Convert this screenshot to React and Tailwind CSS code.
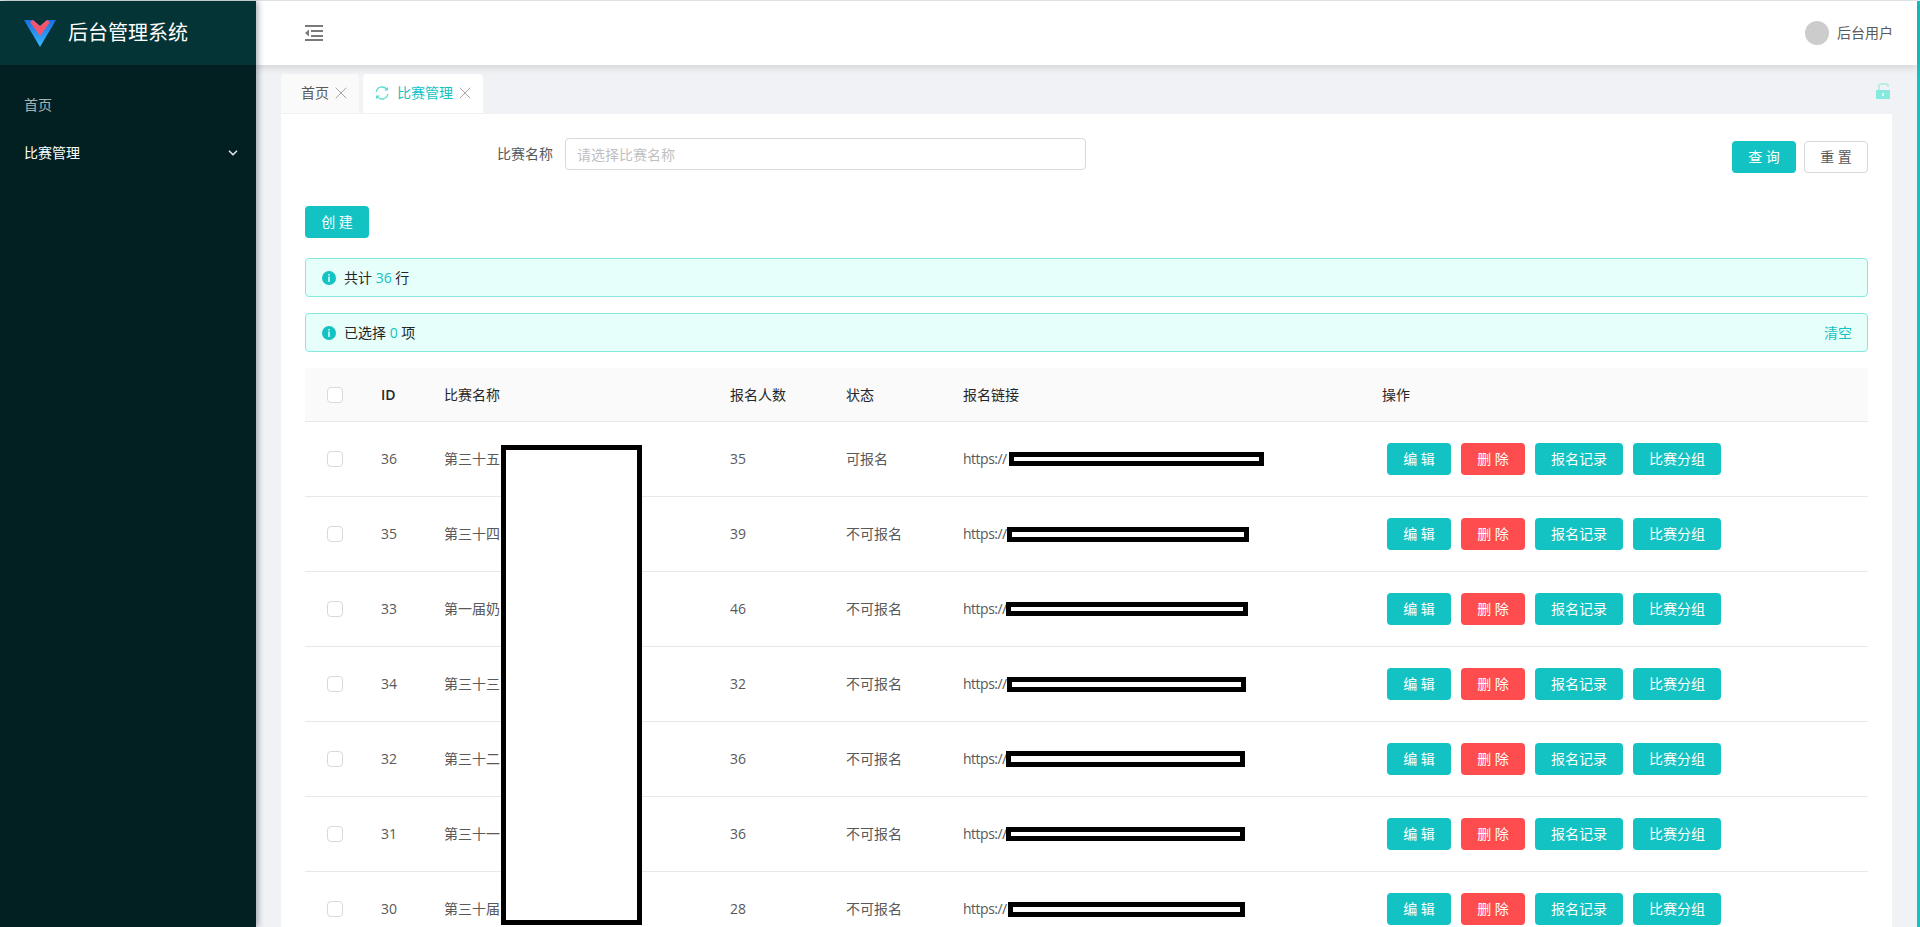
import { X, ChevronDown } from "lucide-react";

const ROWS = [
  { id: 36, name: "第三十五", count: 35, status: "可报名", linkWidth: "w-[255px]", linkClass: "h-[14px] ml-[2px]" },
  { id: 35, name: "第三十四", count: 39, status: "不可报名", linkWidth: "w-[242px]", linkClass: "h-[15px] ml-0" },
  { id: 33, name: "第一届奶", count: 46, status: "不可报名", linkWidth: "w-[242px]", linkClass: "h-[14px] -ml-[1px]" },
  { id: 34, name: "第三十三", count: 32, status: "不可报名", linkWidth: "w-[239px]", linkClass: "h-[15px] ml-0" },
  { id: 32, name: "第三十二", count: 36, status: "不可报名", linkWidth: "w-[239px]", linkClass: "h-[16px] -ml-[1px]" },
  { id: 31, name: "第三十一", count: 36, status: "不可报名", linkWidth: "w-[239px]", linkClass: "h-[14px] -ml-[1px]" },
  { id: 30, name: "第三十届", count: 28, status: "不可报名", linkWidth: "w-[237px]", linkClass: "h-[15px] ml-[1px]" },
];

const GRID = "grid grid-cols-[60px_64px_285px_116px_117px_420px_1fr] items-center";

function Logo() {
  return (
    <svg width="32" height="27" viewBox="0 0 32 27" className="shrink-0">
      <defs>
        <linearGradient id="logoBlue" x1="0" y1="0" x2="0" y2="1">
          <stop offset="0" stopColor="#1a6fe0" />
          <stop offset="1" stopColor="#39b9ff" />
        </linearGradient>
      </defs>
      <polygon points="0,0 9,0 16,6 23,0 32,0 16,27" fill="url(#logoBlue)" />
      <polygon points="9,0 16,6 23,0 26,2 16,16 6,2" fill="#f4556c" />
    </svg>
  );
}

function MenuFold() {
  return (
    <svg width="18" height="16" viewBox="0 0 18 16" fill="#7a7a7a">
      <rect x="0" y="0" width="18" height="2" />
      <rect x="6" y="5" width="12" height="2" />
      <rect x="6" y="10" width="12" height="2" />
      <rect x="0" y="14" width="18" height="2" />
      <polygon points="4,4.5 4,11.5 0,8" />
    </svg>
  );
}

function LockOpen() {
  return (
    <svg width="14" height="16" viewBox="0 0 14 16">
      <path d="M3 7V3a2 2 0 0 1 2-2h5a2 2 0 0 1 2 2v1" fill="none" stroke="#b5efe8" strokeWidth="2" />
      <rect x="0" y="7" width="14" height="9" fill="#87e8de" />
      <rect x="6" y="10" width="2" height="3" fill="#d6f7f3" />
    </svg>
  );
}

function SyncIcon() {
  return (
    <svg width="14" height="14" viewBox="0 0 14 14" fill="none" stroke="#5cdbd3" strokeWidth="1.3" className="shrink-0">
      <path d="M1.2 6A5.9 5.9 0 0 1 11.6 3.2" />
      <path d="M12.8 8A5.9 5.9 0 0 1 2.4 10.8" />
      <polygon points="13,0.8 13,4.6 9.2,4.6" fill="#5cdbd3" stroke="none" />
      <polygon points="1,13.2 1,9.4 4.8,9.4" fill="#5cdbd3" stroke="none" />
    </svg>
  );
}

function InfoIcon() {
  return (
    <svg width="14" height="14" viewBox="0 0 14 14" className="shrink-0">
      <circle cx="7" cy="7" r="7" fill="#13c2c2" />
      <rect x="6.25" y="3" width="1.5" height="1.5" fill="#e6fffb" />
      <rect x="6.25" y="5.5" width="1.5" height="5.5" fill="#e6fffb" />
    </svg>
  );
}

function Btn({ children, danger, wide }) {
  return (
    <button className={`h-8 rounded text-sm text-white ${wide ? "w-[88px]" : "w-16"} ${danger ? "bg-[#ff4d4f]" : "bg-[#13c2c2]"}`}>
      {children}
    </button>
  );
}

function Checkbox() {
  return <span className="block size-4 rounded-sm border border-[#d9d9d9] bg-white" />;
}

function Alert({ children, right }) {
  return (
    <div className="flex h-[39px] items-center justify-between rounded border border-[#87e8de] bg-[#e6fffb] pl-4 pr-[15px] text-sm text-[#262626]">
      <div className="flex items-center gap-2">
        <InfoIcon />
        <span>{children}</span>
      </div>
      {right && <span className="text-[#13c2c2]">{right}</span>}
    </div>
  );
}

export default function App() {
  return (
    <div className="flex h-[927px] overflow-hidden bg-[#e8eaef] pt-px font-['Open_Sans','Noto_Sans_CJK_SC',sans-serif] text-sm text-[#595959]">
      {/* Sidebar */}
      <aside className="relative z-20 w-64 shrink-0 bg-[#021f21] shadow-[2px_0_6px_rgba(0,21,41,0.35)]">
        <div className="flex h-16 items-center gap-3 bg-[#053436] pl-6">
          <Logo />
          <span className="text-xl text-white">后台管理系统</span>
        </div>
        <nav className="pt-4">
          <div className="flex h-12 items-center pl-6 text-white/65">首页</div>
          <div className="flex h-12 items-center justify-between pl-6 pr-4 text-white">
            <span>比赛管理</span>
            <ChevronDown size={14} strokeWidth={3} className="text-white/85" />
          </div>
        </nav>
      </aside>

      <div className="flex min-w-0 flex-1 flex-col bg-[#f0f2f5]">
        {/* Header */}
        <header className="relative z-10 flex h-16 shrink-0 items-center justify-between bg-white pl-[49px] pr-6 shadow-[0_2px_8px_rgba(0,0,0,0.15)]">
          <MenuFold />
          <div className="flex items-center gap-2">
            <span className="size-6 rounded-full bg-[#cccccc]" />
            <span>后台用户</span>
          </div>
        </header>

        <main className="flex min-h-0 flex-1 flex-col px-[25px] pt-[9px]">
          {/* Tabs */}
          <div className="flex h-10 shrink-0 items-start justify-between">
            <div className="flex gap-1">
              <div className="flex h-[39px] w-[78px] items-center gap-0.5 rounded-t bg-[#fafafa] pb-px pl-5">
                <span>首页</span>
                <X size={20} strokeWidth={1.2} className="text-[#a6a6a6]" />
              </div>
              <div className="flex h-[39px] w-[120px] items-center rounded-t bg-white pb-px pl-3 text-[#13c2c2]">
                <SyncIcon />
                <span className="ml-2">比赛管理</span>
                <X size={20} strokeWidth={1.2} className="ml-0.5 text-[#a6a6a6]" />
              </div>
            </div>
            <div className="mr-[2px] mt-[9px]">
              <LockOpen />
            </div>
          </div>

          {/* Card */}
          <section className="flex-1 bg-white px-6 pt-6">
            <div className="flex items-start justify-between">
              <div className="flex h-8 items-center pl-[192px]">
                <label className="w-[60px]">比赛名称</label>
                <input
                  placeholder="请选择比赛名称"
                  className="ml-[8px] h-8 w-[521px] rounded border border-[#d9d9d9] px-[11px] text-sm placeholder:text-[#bfbfbf]"
                />
              </div>
              <div className="mt-[3px] flex gap-2">
                <Btn>查 询</Btn>
                <button className="h-8 w-16 rounded border border-[#d9d9d9] bg-white text-sm">重 置</button>
              </div>
            </div>

            <div className="mt-[33px]">
              <Btn>创 建</Btn>
            </div>

            <div className="mt-5 flex flex-col gap-4">
              <Alert>
                共计 <span className="font-medium text-[#13c2c2]">36</span> 行
              </Alert>
              <Alert right="清空">
                已选择 <span className="font-medium text-[#13c2c2]">0</span> 项
              </Alert>
            </div>

            {/* Table */}
            <div className="relative mt-4">
              <div className={`${GRID} h-[54px] rounded-t border-b border-[#e8e8e8] bg-[#fafafa] text-[#262626]`}>
                <div className="flex justify-center"><Checkbox /></div>
                <div className="px-4 font-semibold">ID</div>
                <div className="pl-[15px]">比赛名称</div>
                <div className="px-4">报名人数</div>
                <div className="px-4">状态</div>
                <div className="px-4">报名链接</div>
                <div className="pl-[15px]">操作</div>
              </div>

              {ROWS.map((row) => (
                <div key={row.id} className={`${GRID} h-[75px] border-b border-[#e8e8e8]`}>
                  <div className="flex justify-center"><Checkbox /></div>
                  <div className="px-4">{row.id}</div>
                  <div className="pl-[15px]">{row.name}</div>
                  <div className="px-4">{row.count}</div>
                  <div className="px-4">{row.status}</div>
                  <div className="flex items-center px-4">
                    <span className="tracking-[-0.5px]">https://</span>
                    <span className={`box-border block border-[5px] border-black bg-white ${row.linkWidth} ${row.linkClass}`} />
                  </div>
                  <div className="flex gap-[10px] pl-5">
                    <Btn>编 辑</Btn>
                    <Btn danger>删 除</Btn>
                    <Btn wide>报名记录</Btn>
                    <Btn wide>比赛分组</Btn>
                  </div>
                </div>
              ))}

              {/* redaction box over the name column */}
              <div className="absolute left-[196px] top-[77px] h-[480px] w-[141px] border-[5px] border-black bg-white" />
            </div>
          </section>
        </main>
      </div>

      {/* scroll strip */}
      <div className="w-[3px] shrink-0 bg-[#13c2c2]" />
    </div>
  );
}
